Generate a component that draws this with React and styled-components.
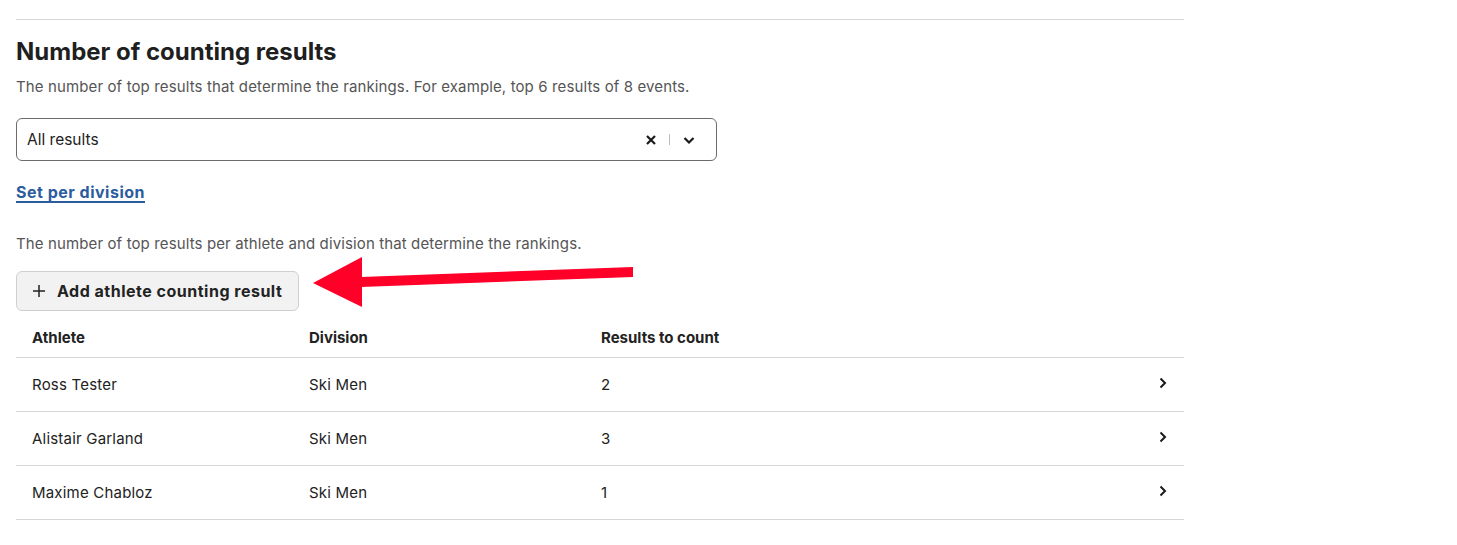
import React from "react";
import styled, { createGlobalStyle } from "styled-components";

const Global = createGlobalStyle`
  html, body { margin: 0; padding: 0; background: #fff; }
  body { font-family: Inter, "Liberation Sans", sans-serif; color: #222; }
  * { box-sizing: border-box; }
`;

const Page = styled.div`
  position: relative;
  width: 1457px;
  height: 545px;
  padding: 0 273px 0 16px;
  overflow: hidden;
`;

const Section = styled.section`
  border-top: 1px solid #d6d6d6;
  margin-top: 19px;
  padding-top: 18px;
  display: flex;
  flex-direction: column;
`;

const Title = styled.h2`
  margin: 0;
  font-family: Inter, sans-serif;
  font-weight: 700;
  font-size: 24px;
  line-height: 28px;
  color: #1f1f1f;
`;

const Hint = styled.p`
  margin: ${(p) => p.$mt || 0}px 0 0;
  font-family: Inter, sans-serif;
  font-size: 15px;
  letter-spacing: 0.12px;
  line-height: 20px;
  color: #555;
`;

const Select = styled.div`
  margin-top: 21px;
  width: 701px;
  height: 43px;
  border: 1px solid #6b6b6b;
  border-radius: 6px;
  display: flex;
  align-items: center;
  padding: 0 20px 0 10px;
`;

const SelectValue = styled.span`
  flex: 1;
  font-family: Inter, sans-serif;
  font-size: 15.5px;
  color: #222;
`;

const Indicators = styled.div`
  display: flex;
  align-items: center;
  gap: 12px;
  color: #1a1a1a;
`;

const Sep = styled.span`
  width: 1px;
  height: 11px;
  background: #bbb;
`;

const Link = styled.a`
  margin-top: 21px;
  align-self: flex-start;
  font-family: Inter, sans-serif;
  font-weight: 700;
  font-size: 16px;
  letter-spacing: 0.5px;
  line-height: 20px;
  color: #2b5c9e;
  text-decoration: underline;
  text-underline-offset: 3px;
  text-decoration-thickness: 1.5px;
`;

const AddButton = styled.button`
  margin-top: 17px;
  align-self: flex-start;
  height: 40px;
  padding: 0 16px 0 15px;
  display: flex;
  align-items: center;
  gap: 11px;
  background: #f2f2f2;
  border: 1px solid #cfcfcf;
  border-radius: 6px;
  font-family: Inter, sans-serif;
  font-weight: 700;
  font-size: 16px;
  letter-spacing: 0.5px;
  color: #222;
  cursor: pointer;
`;

const Table = styled.table`
  margin-top: 8px;
  width: 1168px;
  border-collapse: collapse;
`;

const Th = styled.th`
  text-align: left;
  font-family: Inter, sans-serif;
  font-weight: 700;
  font-size: 15px;
  color: #222;
  height: 38px;
  padding: 0 0 0 ${(p) => p.$pl || 0}px;
  border-bottom: 1px solid #d6d6d6;
  width: ${(p) => p.$w || "auto"};
`;

const Td = styled.td`
  font-family: Inter, sans-serif;
  font-size: 15px;
  letter-spacing: 0.2px;
  color: #222;
  height: 54px;
  padding: 0 0 0 ${(p) => p.$pl || 0}px;
  border-bottom: 1px solid #d6d6d6;
  text-align: ${(p) => p.$align || "left"};
`;

const ChevronCell = styled(Td)`
  padding-right: 14px;
  text-align: right;
  vertical-align: middle;
  svg { display: inline-block; vertical-align: middle; margin-top: -4px; }
`;

const Arrow = styled.svg`
  position: absolute;
  left: 300px;
  top: 250px;
`;

const rows = [
  { name: "Ross Tester", div: "Ski Men", n: 2 },
  { name: "Alistair Garland", div: "Ski Men", n: 3 },
  { name: "Maxime Chabloz", div: "Ski Men", n: 1 },
];

const Chevron = () => (
  <svg width="14" height="14" viewBox="0 0 14 14">
    <path d="M4.5 2.5 L9 7 L4.5 11.5" fill="none" stroke="#1a1a1a" strokeWidth="2" />
  </svg>
);

export default function App() {
  return (
    <Page>
      <Global />
      <Section>
        <Title>Number of counting results</Title>
        <Hint $mt={11}>
          The number of top results that determine the rankings. For example, top 6 results of 8 events.
        </Hint>
        <Select>
          <SelectValue>All results</SelectValue>
          <Indicators>
            <svg width="12" height="12" viewBox="0 0 12 12">
              <path d="M2 2 L10 10 M10 2 L2 10" stroke="#1a1a1a" strokeWidth="2.2" />
            </svg>
            <Sep />
            <svg width="14" height="14" viewBox="0 0 14 14">
              <path d="M2.5 5 L7 9.5 L11.5 5" fill="none" stroke="#1a1a1a" strokeWidth="2.2" />
            </svg>
          </Indicators>
        </Select>
        <Link href="#">Set per division</Link>
        <Hint $mt={32}>The number of top results per athlete and division that determine the rankings.</Hint>
        <AddButton>
          <svg width="14" height="14" viewBox="0 0 14 14">
            <path d="M7 1 V13 M1 7 H13" stroke="#222" strokeWidth="1.5" />
          </svg>
          Add athlete counting result
        </AddButton>
        <Table>
          <thead>
            <tr>
              <Th $pl={16} $w="293px">Athlete</Th>
              <Th $w="292px">Division</Th>
              <Th>Results to count</Th>
              <Th $w="60px" />
            </tr>
          </thead>
          <tbody>
            {rows.map((r) => (
              <tr key={r.name}>
                <Td $pl={16}>{r.name}</Td>
                <Td>{r.div}</Td>
                <Td>{r.n}</Td>
                <ChevronCell>
                  <Chevron />
                </ChevronCell>
              </tr>
            ))}
          </tbody>
        </Table>
      </Section>
      <Arrow width="340" height="70" viewBox="0 0 340 70">
        <polygon points="333,17 333,27 61,37 61,27" fill="#ff0028" />
        <polygon points="13,33 62,7 62,57" fill="#ff0028" />
      </Arrow>
    </Page>
  );
}
